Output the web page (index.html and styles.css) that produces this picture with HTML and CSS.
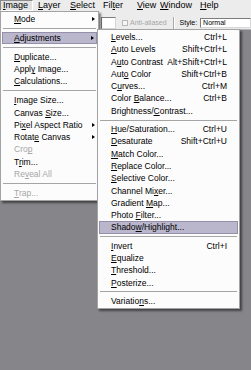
FILE: index.html
```html
<!DOCTYPE html>
<html lang="en">
<head>
    <meta charset="UTF-8">
    <meta name="viewport" content="width=device-width, initial-scale=1.0">
    <title>Image &gt; Adjustments</title>
    <link rel="stylesheet" href="styles.css">
</head>
<body>
    <div class="app">
        <!-- Menu bar -->
        <div class="menubar">
            <span class="m-image"><u>I</u>mage</span>
            <span class="m-layer"><u>L</u>ayer</span>
            <span class="m-select"><u>S</u>elect</span>
            <span class="m-filter">Fil<u>t</u>er</span>
            <span class="m-view"><u>V</u>iew</span>
            <span class="m-window"><u>W</u>indow</span>
            <span class="m-help"><u>H</u>elp</span>
        </div>

        <!-- Tool options -->
        <div class="optionsbar">
            <span class="opt-label feather">Feather:</span>
            <span class="field field-small"></span>
            <span class="check"></span>
            <span class="opt-label disabled">Anti-aliased</span>
            <span class="divider"></span>
            <span class="opt-label style-label">Style:</span>
            <span class="field field-style">Normal</span>
        </div>

        <div class="workspace"></div>

        <!-- Image menu -->
        <div class="menu image-menu">
            <div class="item"><span><u>M</u>ode</span><i class="arrow"></i></div>
            <div class="sep"></div>
            <div class="item active"><span><u>A</u>djustments</span><i class="arrow"></i></div>
            <div class="sep"></div>
            <div class="item"><span><u>D</u>uplicate...</span></div>
            <div class="item"><span>Appl<u>y</u> Image...</span></div>
            <div class="item"><span><u>C</u>alculations...</span></div>
            <div class="sep"></div>
            <div class="item"><span><u>I</u>mage Size...</span></div>
            <div class="item"><span>Canvas <u>S</u>ize...</span></div>
            <div class="item"><span>Pi<u>x</u>el Aspect Ratio</span><i class="arrow"></i></div>
            <div class="item"><span>Rotat<u>e</u> Canvas</span><i class="arrow"></i></div>
            <div class="item disabled"><span>Cro<u>p</u></span></div>
            <div class="item"><span>T<u>r</u>im...</span></div>
            <div class="item disabled"><span>Re<u>v</u>eal All</span></div>
            <div class="sep"></div>
            <div class="item disabled"><span><u>T</u>rap...</span></div>
        </div>

        <!-- Adjustments submenu -->
        <div class="menu sub-menu">
            <div class="item"><span><u>L</u>evels...</span><span class="key">Ctrl+L</span></div>
            <div class="item"><span><u>A</u>uto Levels</span><span class="key">Shift+Ctrl+L</span></div>
            <div class="item"><span>A<u>u</u>to Contrast</span><span class="key">Alt+Shift+Ctrl+L</span></div>
            <div class="item"><span>Aut<u>o</u> Color</span><span class="key">Shift+Ctrl+B</span></div>
            <div class="item"><span>C<u>u</u>rves...</span><span class="key">Ctrl+M</span></div>
            <div class="item"><span>Color <u>B</u>alance...</span><span class="key">Ctrl+B</span></div>
            <div class="item"><span>Brightness/<u>C</u>ontrast...</span></div>
            <div class="sep"></div>
            <div class="item"><span><u>H</u>ue/Saturation...</span><span class="key">Ctrl+U</span></div>
            <div class="item"><span><u>D</u>esaturate</span><span class="key">Shift+Ctrl+U</span></div>
            <div class="item"><span><u>M</u>atch Color...</span></div>
            <div class="item"><span><u>R</u>eplace Color...</span></div>
            <div class="item"><span><u>S</u>elective Color...</span></div>
            <div class="item"><span>Channel Mi<u>x</u>er...</span></div>
            <div class="item"><span>Gradient <u>M</u>ap...</span></div>
            <div class="item"><span>Photo <u>F</u>ilter...</span></div>
            <div class="item active"><span>Shado<u>w</u>/Highlight...</span></div>
            <div class="sep"></div>
            <div class="item"><span><u>I</u>nvert</span><span class="key">Ctrl+I</span></div>
            <div class="item"><span><u>E</u>qualize</span></div>
            <div class="item"><span><u>T</u>hreshold...</span></div>
            <div class="item"><span><u>P</u>osterize...</span></div>
            <div class="sep"></div>
            <div class="item"><span>Variatio<u>n</u>s...</span></div>
        </div>
    </div>
</body>
</html>
```

FILE: styles.css
```css
* {
    margin: 0;
    padding: 0;
    box-sizing: border-box;
}

body {
    font-family: "Liberation Sans", Arial, sans-serif;
    font-size: 9px;
    color: #000;
    background: #868589;
    overflow: hidden;
}

u {
    text-decoration-thickness: 1px;
}

.app {
    position: relative;
    width: 251px;
    height: 370px;
    display: flex;
    flex-direction: column;
}

/* menu bar */
.menubar {
    display: flex;
    height: 11px;
    line-height: 11px;
    background: #ececec;
    white-space: nowrap;
}

.menubar span {
    padding-left: 4px;
}

.m-image {
    width: 33px;
    line-height: 9px;
    padding-left: 2px !important;
    border: 1px solid;
    border-color: #8a8a8a #fff #fff #8a8a8a;
    background: #e2e2e2;
}

.m-layer  { width: 33px; padding-left: 5px !important; }
.m-select { width: 33px; }
.m-filter { width: 37px; }
.m-view   { width: 20px; padding-left: 1px !important; }
.m-window { width: 40px; padding-left: 4px; }

/* tool options */
.optionsbar {
    display: flex;
    align-items: center;
    height: 19px;
    padding-top: 5px;
    background: #ececec;
    border-bottom: 1px solid #b4b4b4;
    font-size: 7px;
    white-space: nowrap;
}

.feather {
    width: 101px;
    text-align: right;
    padding-right: 4px;
}

.field {
    background: #fff;
    border: 1px solid;
    border-color: #7c7c7c #d6d6d6 #d6d6d6 #7c7c7c;
}

.field-small {
    width: 15px;
    height: 12px;
}

.check {
    width: 6px;
    height: 6px;
    margin-left: 6px;
    border: 1px solid #b8b8b8;
    background: #f6f6f6;
}

.opt-label.disabled {
    margin-left: 2px;
    color: #a6a6a6;
}

.divider {
    width: 2px;
    height: 12px;
    margin-left: 6px;
    border-left: 1px solid #a9a9a9;
    border-right: 1px solid #fff;
}

.style-label {
    margin-left: 5px;
}

.field-style {
    flex: 1;
    height: 10px;
    line-height: 8px;
    margin-left: 3px;
    padding-left: 2px;
}

.workspace {
    flex: 1;
    background: #868589;
}

/* dropdown menus */
.menu {
    position: absolute;
    background: #fcfcfc;
    border: 1px solid #a3a3a3;
    padding: 1px;
    font-size: 8.5px;
    box-shadow: 2px 2px 2px rgba(0, 0, 0, 0.5);
}

.image-menu {
    left: 0;
    top: 11px;
    width: 99px;
}

.sub-menu {
    left: 97px;
    top: 29px;
    width: 143px;
}

.item {
    display: flex;
    align-items: center;
    height: 12.3px;
    line-height: 12.3px;
    padding: 0 11px 0 12px;
    white-space: nowrap;
}

.image-menu .item {
    padding-right: 2px;
}

.item.active {
    background: #bab6cb;
    border: 1px solid #958fab;
    padding-left: 11px;
}

.item.disabled {
    color: #a6a6a6;
}

.key {
    margin-left: auto;
}

.arrow {
    margin-left: auto;
    width: 0;
    height: 0;
    border-left: 3px solid #000;
    border-top: 2.5px solid transparent;
    border-bottom: 2.5px solid transparent;
}

.sep {
    display: flex;
    align-items: center;
    height: 6.6px;
    padding: 0 1px;
}

.sub-menu .sep {
    height: 6px;
}

.sep::before {
    content: "";
    flex: 1;
    border-top: 1px solid #a5a5a5;
}
```
